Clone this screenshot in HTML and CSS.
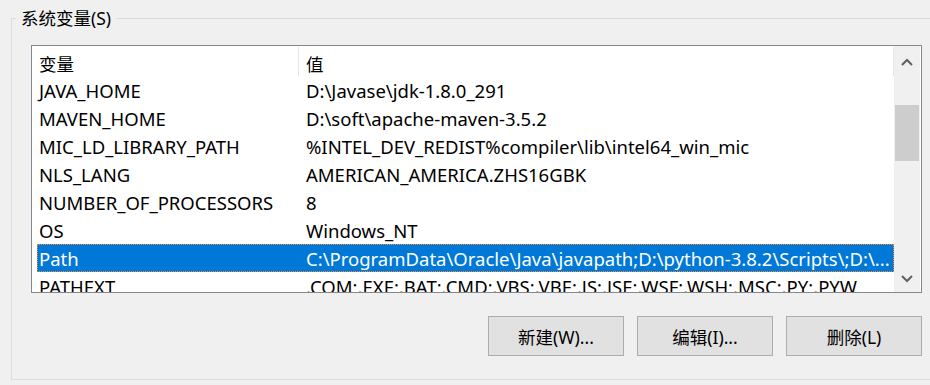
FILE: index.html
```html
<!DOCTYPE html>
<html lang="zh-CN">

<head>
    <meta charset="UTF-8">
    <title>系统变量</title>
    <link rel="stylesheet" href="styles.css">
</head>

<body>

    <fieldset class="group">
        <legend>系统变量(S)</legend>

        <div class="list">
            <div class="list-body">
                <div class="row head">
                    <span class="name">变量</span>
                    <span class="value">值</span>
                </div>
                <div class="row"><span class="name">JAVA_HOME</span><span class="value">D:\Javase\jdk-1.8.0_291</span></div>
                <div class="row"><span class="name">MAVEN_HOME</span><span class="value">D:\soft\apache-maven-3.5.2</span></div>
                <div class="row"><span class="name">MIC_LD_LIBRARY_PATH</span><span class="value">%INTEL_DEV_REDIST%compiler\lib\intel64_win_mic</span></div>
                <div class="row"><span class="name">NLS_LANG</span><span class="value">AMERICAN_AMERICA.ZHS16GBK</span></div>
                <div class="row"><span class="name">NUMBER_OF_PROCESSORS</span><span class="value">8</span></div>
                <div class="row"><span class="name">OS</span><span class="value">Windows_NT</span></div>
                <div class="row selected"><span class="name">Path</span><span class="value">C:\ProgramData\Oracle\Java\javapath;D:\python-3.8.2\Scripts\;D:\...</span></div>
                <div class="row"><span class="name">PATHEXT</span><span class="value">.COM;.EXE;.BAT;.CMD;.VBS;.VBE;.JS;.JSE;.WSF;.WSH;.MSC;.PY;.PYW</span></div>
            </div>

            <div class="scrollbar">
                <div class="arrow up">
                    <svg width="12" height="8" viewBox="0 0 12 8"><path d="M1 7 L6 2 L11 7" fill="none" stroke="#606060" stroke-width="2"/></svg>
                </div>
                <div class="track">
                    <div class="thumb"></div>
                </div>
                <div class="arrow down">
                    <svg width="12" height="8" viewBox="0 0 12 8"><path d="M1 1 L6 6 L11 1" fill="none" stroke="#606060" stroke-width="2"/></svg>
                </div>
            </div>
        </div>

        <div class="buttons">
            <button>新建(W)...</button>
            <button>编辑(I)...</button>
            <button>删除(L)</button>
        </div>
    </fieldset>

</body>

</html>
```

FILE: styles.css
```css
/* Fenêtre de base */
* {
    box-sizing: border-box;
}

body {
    margin: 0;
    width: 930px;
    height: 385px;
    overflow: hidden;
    background-color: #f0f0f0;
    color: #000;
    font-family: "Noto Sans", "Noto Sans CJK SC", sans-serif;
    font-size: 17.5px;
}

/* Cadre "系统变量" */
.group {
    margin: 6px 0 0 11px;
    padding: 0;
    height: 374px;
    min-width: 0;
    border: 1px solid #dcdcdc;
    border-right: none;
}

.group legend {
    margin-left: 4px;
    padding: 0 5px;
    line-height: 24px;
}

/* Liste des variables */
.list {
    display: flex;
    margin: 15px 0 0 19px;
    width: 891px;
    height: 248px;
    border: 1px solid #828790;
    background-color: #fff;
}

.list-body {
    width: 862px;
    overflow: hidden;
}

.row {
    display: flex;
    align-items: center;
    height: 28px;
    margin-left: 5px;
    white-space: nowrap;
    font-size: 18.5px;
}

.row .name {
    width: 262px;
    flex-shrink: 0;
    padding-left: 2px;
}

.row .value {
    flex: 1;
    padding-left: 7px;
    overflow: hidden;
}

.row.head {
    height: 30px;
    align-items: stretch;
    font-size: 17.5px;
}

.row.head span {
    display: flex;
    align-items: center;
    padding-top: 3px;
    border-right: 1px solid #e5e5e5;
    margin-top: 1px;
}

.row.selected {
    background-color: #0078d7;
    color: #fff;
    outline: 1px dotted #ff8728;
    outline-offset: -1px;
}

/* Barre de défilement */
.scrollbar {
    display: flex;
    flex-direction: column;
    width: 26px;
    background-color: #f0f0f0;
}

.arrow {
    display: flex;
    justify-content: center;
    align-items: center;
}

.arrow.up {
    height: 31px;
}

.arrow.down {
    height: 26px;
}

.track {
    flex: 1;
}

.thumb {
    margin: 28px 1px 0;
    height: 56px;
    background-color: #cdcdcd;
}

/* Boutons */
.buttons {
    display: flex;
    justify-content: flex-end;
    gap: 13px;
    margin: 23px 0 0 19px;
    width: 891px;
}

.buttons button {
    width: 136px;
    height: 40px;
    padding: 0;
    border: 1px solid #adadad;
    background-color: #e1e1e1;
    font: inherit;
    color: #000;
}
```
